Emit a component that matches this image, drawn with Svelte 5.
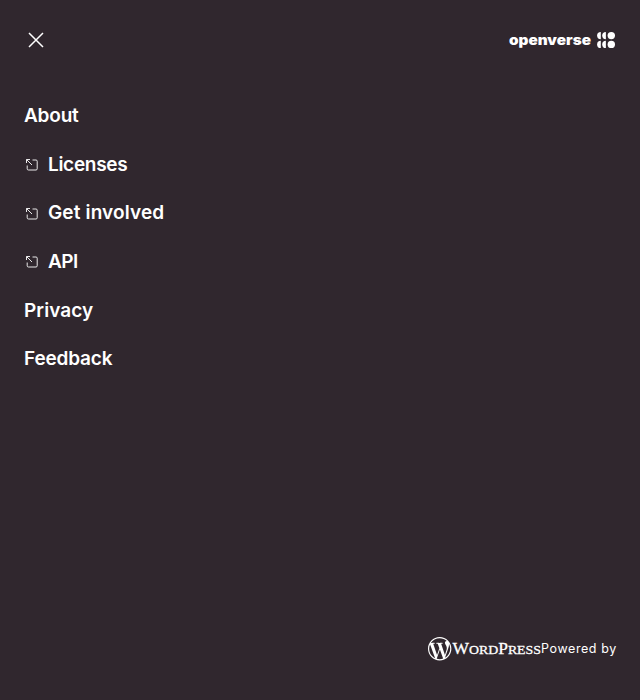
<script>
  const links = [
    { label: 'About', external: false, tracking: -0.2 },
    { label: 'Licenses', external: true, tracking: -0.3 },
    { label: 'Get involved', external: true, tracking: 0.14 },
    { label: 'API', external: true, tracking: -0.5 },
    { label: 'Privacy', external: false, tracking: 0.08 },
    { label: 'Feedback', external: false, tracking: -0.18 }
  ];
</script>

<div class="modal">
  <header>
    <button class="close" aria-label="Close">
      <svg width="24" height="24" viewBox="0 0 24 24" fill="none" stroke="currentColor" stroke-width="1.5">
        <path d="M5 5l14 14M19 5L5 19" />
      </svg>
    </button>
    <svg class="brand" width="108" height="24" viewBox="0 0 108 24" fill="currentColor" aria-label="Openverse">
      <text x="1" y="16.5" textLength="82" lengthAdjust="spacingAndGlyphs">openverse</text>
      <circle cx="103.3" cy="7.6" r="3.7" />
      <circle cx="103.3" cy="16.4" r="3.7" />
      <path d="M97.9 3.9a3.7 3.7 0 0 0 0 7.4z" />
      <path d="M97.9 12.7a3.7 3.7 0 0 0 0 7.4z" />
      <path d="M92.8 3.9a3.7 3.7 0 0 0 0 7.4z" />
      <path d="M92.8 12.7a3.7 3.7 0 0 0 0 7.4z" />
    </svg>
  </header>

  <nav>
    {#each links as link}
      <a href="#top">
        {#if link.external}
          <svg width="16" height="16" viewBox="0 0 16 16" fill="none" stroke="currentColor" stroke-width="1">
            <path d="M2.5 6V2.5H6M2.5 2.5l5.5 5.5M8.5 3H12a1.2 1.2 0 0 1 1.2 1.2v7.6A1.2 1.2 0 0 1 12 13H4.4a1.2 1.2 0 0 1-1.2-1.2V8.5" />
          </svg>
        {/if}
        <span style="letter-spacing: {link.tracking}px">{link.label}</span>
      </a>
    {/each}
  </nav>

  <footer>
    <svg class="wordpress" width="113" height="24" viewBox="0 0 113 24" fill="currentColor" aria-label="WordPress">
      <path transform="scale(.975)" d="M21.469 6.825c.84 1.537 1.318 3.3 1.318 5.175 0 3.979-2.156 7.456-5.363 9.325l3.295-9.527c.615-1.54.82-2.771.82-3.864 0-.405-.026-.78-.07-1.11m-7.981.105c.647-.03 1.232-.105 1.232-.105.582-.075.514-.93-.067-.899 0 0-1.755.135-2.88.135-1.064 0-2.85-.15-2.85-.15-.585-.03-.661.855-.075.885 0 0 .54.061 1.125.09l1.68 4.605-2.37 7.08L5.354 6.9c.649-.03 1.234-.1 1.234-.1.585-.075.516-.93-.065-.896 0 0-1.746.138-2.874.138-.2 0-.438-.008-.69-.015C4.911 3.15 8.235 1.215 12 1.215c2.809 0 5.365 1.072 7.286 2.833-.046-.003-.091-.009-.141-.009-1.06 0-1.812.923-1.812 1.914 0 .89.513 1.643 1.06 2.531.411.72.89 1.643.89 2.977 0 .915-.354 1.994-.821 3.479l-1.075 3.585-3.9-11.61.001.014zM12 22.784c-1.059 0-2.081-.153-3.048-.437l3.237-9.406 3.315 9.087c.024.053.05.101.078.149-1.12.393-2.325.609-3.582.609M1.211 12c0-1.564.336-3.05.935-4.39L7.29 21.709C3.694 19.96 1.212 16.271 1.211 12M12 0C5.385 0 0 5.385 0 12s5.385 12 12 12 12-5.385 12-12S18.615 0 12 0" />
      <text x="24.5" y="17.3" textLength="88.5" lengthAdjust="spacingAndGlyphs"><tspan class="cap">W</tspan><tspan class="small">ORD</tspan><tspan class="cap">P</tspan><tspan class="small">RESS</tspan></text>
    </svg>
    <span>Powered by</span>
  </footer>
</div>

<style>
  :global(body) {
    margin: 0;
    background: #30272e;
  }
  .modal {
    box-sizing: border-box;
    height: 100vh;
    display: flex;
    flex-direction: column;
    background: #30272e;
    color: #fff;
    font-family: Inter, sans-serif;
  }
  header {
    height: 80px;
    display: flex;
    align-items: center;
    justify-content: space-between;
    padding: 0 24px;
  }
  .close {
    display: flex;
    padding: 0;
    border: 0;
    background: none;
    color: inherit;
  }
  .brand text {
    font: 900 14px/1 Inter, sans-serif;
  }
  nav {
    display: flex;
    flex-direction: column;
    align-items: flex-start;
    gap: 24px;
    padding: 24px 24px 0;
  }
  nav a {
    display: flex;
    align-items: center;
    gap: 8px;
    color: inherit;
    text-decoration: none;
    font-size: 19px;
    font-weight: 600;
    line-height: 1.3;
  }
  nav svg {
    opacity: 0.9;
  }
  footer {
    display: flex;
    align-items: center;
    justify-content: flex-end;
    margin-top: auto;
    padding: 0 24px 39px;
    line-height: 24px;
  }
  footer span {
    width: 75px;
    white-space: nowrap;
    font-size: 12.5px;
    letter-spacing: 0.6px;
  }
  .wordpress .cap {
    font: 17px "Liberation Serif", serif;
  }
  .wordpress .small {
    font: 13.5px "Liberation Serif", serif;
  }
  .wordpress text {
    stroke: currentColor;
    stroke-width: 0.3px;
  }
</style>
